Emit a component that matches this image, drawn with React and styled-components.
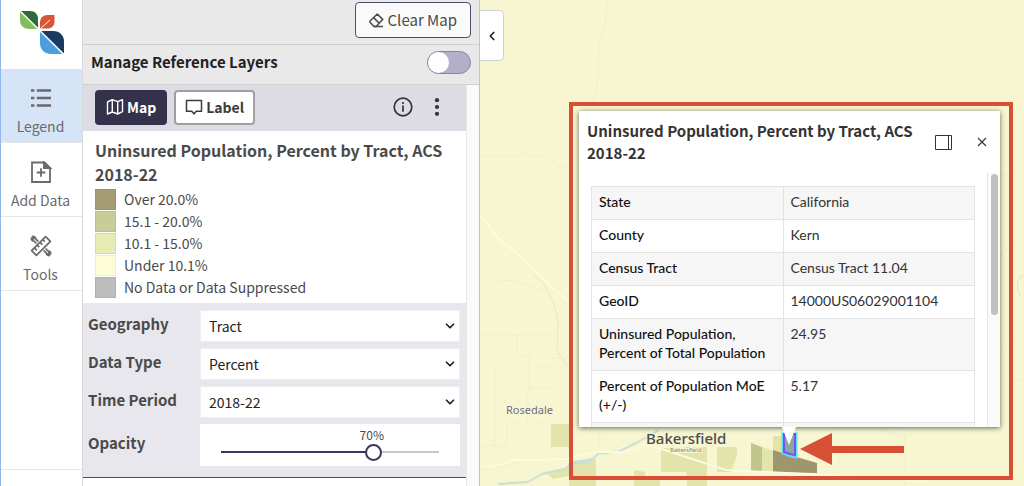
import React, { useState } from 'react';
import styled, { createGlobalStyle } from 'styled-components';
import { ChevronDown, ChevronLeft } from 'lucide-react';

const GlobalStyle = createGlobalStyle`
  *, *::before, *::after { box-sizing: border-box; }
  body {
    margin: 0;
    background: #fff;
    color: #4a4a4a;
    font-family: 'Noto Sans CJK SC', 'Noto Sans', sans-serif;
    font-size: 14px;
    line-height: 20px;
  }
  button, select, input { font: inherit; color: inherit; margin: 0; }
`;

const Screen = styled.div`
  display: grid;
  grid-template-columns: 82px 398px 1fr;
  height: 100vh;
  overflow: hidden;
`;

/* ---------- sidebar ---------- */

const Sidebar = styled.nav`
  display: flex;
  flex-direction: column;
  border-left: 1px solid #8fb8e8;
  background: #fff;
`;

const LogoLink = styled.a`
  display: flex;
  justify-content: center;
  height: 69px;
  padding-top: 11px;
`;

const NavItem = styled.button`
  display: flex;
  flex-direction: column;
  align-items: center;
  gap: 7px;
  height: 74px;
  padding: 18px 4px 0 2px;
  border: 0;
  border-bottom: 1px solid #e6e6ea;
  background: ${props => (props.$active ? '#d5e4f7' : '#fff')};
  color: #6a6a6a;
  cursor: pointer;
`;

const NavFoot = styled.div`
  height: 17px;
  margin-top: auto;
  border-top: 1px solid #e6e6ea;
`;

/* ---------- panel ---------- */

const Panel = styled.section`
  display: flex;
  flex-direction: column;
  min-height: 0;
  border-left: 1px solid #d9d9dc;
  border-right: 1px solid #c4c4c4;
  background: #fff;
`;

const TopBar = styled.div`
  display: flex;
  justify-content: flex-end;
  padding: 2px 8px 6px;
  background: #e9e9e9;
  border-bottom: 1px solid #cfcfcf;
`;

const ClearButton = styled.button`
  display: flex;
  align-items: center;
  gap: 4px;
  height: 36px;
  padding: 0 13px;
  border: 1px solid #4f4d70;
  border-radius: 4px;
  background: #fafafa;
  font-size: 15px;
  cursor: pointer;
`;

const ReferenceRow = styled.label`
  display: flex;
  align-items: flex-start;
  justify-content: space-between;
  height: 40px;
  padding: 6px 8px 0;
  background: #e9e9e9;
  border-bottom: 1px solid #cfcfcf;
  color: #222;
  font-size: 15px;
  line-height: 22px;
  font-weight: 700;
`;

const Toggle = styled.input`
  appearance: none;
  display: flex;
  align-items: center;
  width: 44px;
  height: 23px;
  border: 1px solid #8583a8;
  border-radius: 12px;
  background: #b1b0c8;
  cursor: pointer;
  &::before {
    content: '';
    width: 21px;
    height: 21px;
    border-radius: 50%;
    background: #fff;
  }
  &:checked { justify-content: flex-end; }
`;

const PanelBody = styled.div`
  display: flex;
  flex: 1;
  min-height: 0;
`;

const Layer = styled.div`
  flex: 1;
  overflow: hidden;
`;

const Gutter = styled.div`
  width: 13px;
  border-left: 1px solid #e8e8e8;
  background: #fafafa;
`;

const LayerBar = styled.div`
  display: flex;
  align-items: center;
  gap: 7px;
  height: 46px;
  padding: 0 19px 2px 12px;
  background: #dddce5;
`;

const LayerButton = styled.button`
  display: flex;
  align-items: center;
  gap: 3px;
  height: 35px;
  padding: 0 9px;
  border: 2px solid ${props => (props.$primary ? '#33324a' : '#a0a0a0')};
  border-radius: 4px;
  background: ${props => (props.$primary ? '#33324a' : '#fff')};
  color: ${props => (props.$primary ? '#fff' : '#3c3c3c')};
  font-weight: 700;
  cursor: pointer;
`;

const LayerActions = styled.div`
  display: flex;
  gap: 14px;
  margin-left: auto;
`;

const IconButton = styled.button`
  display: flex;
  padding: 0;
  border: 0;
  background: none;
  color: #333;
  cursor: pointer;
`;

const LegendCard = styled.div`
  padding: 7px 12px 5px;
  border-bottom: 1px solid #e8e7ed;
`;

const LegendTitle = styled.h2`
  margin: 0 0 3px;
  font-size: 16px;
  line-height: 24px;
  font-weight: 700;
`;

const LegendList = styled.ul`
  display: flex;
  flex-direction: column;
  gap: 1px;
  margin: 0;
  padding: 0;
  list-style: none;
`;

const LegendEntry = styled.li`
  display: flex;
  align-items: center;
  gap: 8px;
  line-height: 21px;
`;

const Swatch = styled.span`
  width: 21px;
  height: 21px;
  border: 1px solid rgba(0, 0, 0, 0.06);
  background: ${props => props.$color};
`;

const Settings = styled.div`
  display: grid;
  grid-template-columns: 112px 1fr;
  gap: 6px 0;
  padding: 6px 6px 11px 5px;
  background: #e8e7ed;
  border-bottom: 1px solid #4f4d70;
`;

const FieldLabel = styled.label`
  align-self: center;
  padding-bottom: 5px;
  font-size: 15px;
  font-weight: 700;
`;

const SelectBox = styled.div`
  display: grid;
  align-items: center;
  height: 32px;
  background: #fff;
  color: #222;
  > * { grid-area: 1 / 1; }
  > svg { justify-self: end; margin-right: 3px; pointer-events: none; }
`;

const Select = styled.select`
  appearance: none;
  width: 100%;
  height: 32px;
  padding: 0 24px 0 8px;
  border: 1px solid #eeeef2;
  border-radius: 0;
  background: #fff;
`;

const SliderBox = styled.div`
  display: flex;
  flex-direction: column;
  height: 42px;
  padding: 3px 13px 0;
  background: #fff;
`;

const SliderValue = styled.output`
  padding: 0 8px;
  font-size: 12px;
  line-height: 16px;
`;

const Slider = styled.input`
  appearance: none;
  width: 100%;
  height: 18px;
  background:
    linear-gradient(to right, #3a3858 ${props => props.$value}%, #c8c8c8 ${props => props.$value}%)
    8px 50% / calc(100% - 16px) 2px no-repeat;
  &::-webkit-slider-thumb {
    appearance: none;
    width: 17px;
    height: 17px;
    border: 2px solid #3a3858;
    border-radius: 50%;
    background: #fff;
  }
`;

/* ---------- map ---------- */

const MapArea = styled.main`
  position: relative;
  overflow: hidden;
  background: #f7f6d1;
`;

const MapCanvas = styled.svg`
  display: block;
`;

const CollapseButton = styled.button`
  position: absolute;
  left: 0;
  top: 10px;
  display: flex;
  align-items: center;
  justify-content: center;
  width: 24px;
  height: 51px;
  padding: 0;
  border: 1px solid #cfcfcf;
  border-left: 0;
  border-radius: 0 5px 5px 0;
  background: #fff;
  color: #222;
`;

const PlaceLabel = styled.text`
  font-family: 'Noto Sans', sans-serif;
  font-size: ${props => props.$size}px;
  font-weight: ${props => props.$weight || 400};
  fill: ${props => props.$color};
  stroke: #f7f6d1;
  stroke-width: 2px;
  paint-order: stroke;
`;

const Highlight = styled.div`
  position: absolute;
  left: 89px;
  top: 102px;
  width: 444px;
  height: 378px;
  border: 4px solid #d75036;
  pointer-events: none;
`;

const Popup = styled.article`
  position: absolute;
  left: 99px;
  top: 111px;
  display: flex;
  flex-direction: column;
  width: 421px;
  height: 316px;
  background: #fff;
  box-shadow: 0 1px 5px rgba(0, 0, 0, 0.6);
  &::after {
    content: '';
    position: absolute;
    top: 100%;
    left: 203px;
    width: 14px;
    height: 18px;
    background: #fff;
    clip-path: polygon(0 0, 100% 0, 50% 100%);
  }
`;

const PopupHeader = styled.header`
  display: flex;
  align-items: center;
  height: 62px;
  padding: 0 12px 0 8px;
`;

const PopupTitle = styled.h3`
  flex: 1;
  margin: 0;
  color: #333;
  font-size: 15px;
  line-height: 22px;
  font-weight: 700;
`;

const PopupActions = styled.div`
  display: flex;
  align-items: center;
  gap: 24px;
`;

const PopupBody = styled.div`
  display: flex;
  flex: 1;
  min-height: 0;
`;

const TableWrap = styled.div`
  flex: 1;
  overflow: hidden;
  padding: 13px 12px 0;
`;

const ScrollTrack = styled.div`
  width: 13px;
  padding: 1px 2px;
  border-left: 1px solid #e8e8e8;
  background: #fafafa;
`;

const ScrollThumb = styled.div`
  width: 7px;
  height: 141px;
  margin: 0 auto;
  border-radius: 4px;
  background: #c1c1c1;
`;

const Table = styled.table`
  width: 100%;
  border-collapse: collapse;
  table-layout: fixed;
  font-family: Lato, sans-serif;
  font-size: 14px;
  line-height: 19px;
  color: #333;
  th, td {
    padding: 5px 7px 8px;
    border: 1px solid #e3e3e3;
    text-align: left;
    vertical-align: top;
  }
  th { color: #111; font-weight: 500; }
  tr:nth-child(odd) { background: #f6f6f6; }
`;

const NAV = [
  { id: 'legend', label: 'Legend', icon: LegendIcon },
  { id: 'add', label: 'Add Data', icon: AddDataIcon },
  { id: 'tools', label: 'Tools', icon: ToolsIcon },
];

const CLASSES = [
  { label: 'Over 20.0%', color: '#a59c73' },
  { label: '15.1 - 20.0%', color: '#c8cc96' },
  { label: '10.1 - 15.0%', color: '#e7eab3' },
  { label: 'Under 10.1%', color: '#fdfdd8' },
  { label: 'No Data or Data Suppressed', color: '#bdbdbd' },
];

const FIELDS = [
  { id: 'geography', label: 'Geography', options: ['Tract', 'County', 'State'] },
  { id: 'dataType', label: 'Data Type', options: ['Percent', 'Number'] },
  { id: 'period', label: 'Time Period', options: ['2018-22', '2017-21'] },
];

const ROWS = [
  ['State', 'California'],
  ['County', 'Kern'],
  ['Census Tract', 'Census Tract 11.04'],
  ['GeoID', '14000US06029001104'],
  ['Uninsured Population, Percent of Total Population', '24.95'],
  ['Percent of Population MoE (+/-)', '5.17'],
  ['', ''],
];

function Logo() {
  return (
    <svg width="44" height="44" viewBox="0 0 44 44">
      <path d="M0 0v9c0 5.500 3.500 9 9 9h9z" fill="#7fbf5a" />
      <path d="M0 0h10c5 0 8 3.500 8 8v10z" fill="#2f6b3a" />
      <path d="M20 17.500v-6C20 7 23 4 27.500 4h7v6.500c0 4.500-3 7-7 7z" fill="#d65638" />
      <path d="M20.500 17.500L30 9" stroke="#fff" strokeWidth="1" />
      <path d="M20 20v12c0 7 5 11 11 11h13z" fill="#4a9fdb" />
      <path d="M20 20h13c7 0 11 5 11 10v13z" fill="#1b3a60" />
      <path d="M0 0l44 43.500" stroke="#fff" strokeWidth="1.600" />
    </svg>
  );
}

function LegendIcon() {
  return (
    <svg width="22" height="22" viewBox="0 0 22 22" fill="none" stroke="currentColor" strokeWidth="2.4">
      <path d="M1 3.5h3.4M6.8 3.5H21M1 11h3.4M6.8 11H21M1 18.5h3.4M6.8 18.5H21" />
    </svg>
  );
}

function AddDataIcon() {
  return (
    <svg width="22" height="22" viewBox="0 0 22 22" fill="none" stroke="currentColor" strokeWidth="1.8">
      <path d="M2 1.5h12.5L20 7v14H2z" />
      <path d="M14 1.5V7h6z" fill="currentColor" />
      <path d="M11 7.2v8.6M6.7 11.5h8.6" />
    </svg>
  );
}

function ToolsIcon() {
  return (
    <svg width="22" height="22" viewBox="0 0 22 22" fill="none" stroke="currentColor" strokeWidth="1.7" strokeLinejoin="round">
      <path d="M15.6 1.6l4.8 4.8L6.4 20.4 1.6 15.6z" />
      <path d="M12.8 4.6l2 2M10 7.3l2.4 2.4M7.2 10.1l2 2M4.4 12.9l2.4 2.4" />
      <path d="M8.4 6.6L5.7 3.9C5.6 2.3 4 1.2 2.4 1.5L4 3.3 3.2 4.3 1.3 3.2C1.2 5 2.6 6.2 4.2 6.2L6.4 8.5" />
      <path d="M13.6 15.4l2.7 2.7c.1 1.6 1.7 2.7 3.3 2.4L18 18.700l.8-1 1.9 1.1c.1-1.800-1.300-3-2.900-3L15.600 13.500" />
    </svg>
  );
}

function EraserIcon() {
  return (
    <svg width="15" height="15" viewBox="0 0 15 15" fill="none" stroke="currentColor" strokeWidth="1.5" strokeLinejoin="round">
      <path d="M8.3 1l5.4 5.4-6.600 7H5L1 9.200V8z" />
      <path d="M4.600 4.600l5.700 5.600M5 13.400h9" />
    </svg>
  );
}

function MapIcon() {
  return (
    <svg width="18" height="18" viewBox="0 0 18 18" fill="none" stroke="currentColor" strokeWidth="1.4" strokeLinejoin="round">
      <path d="M1.5 4L6.3 1.7l5.4 2 4.8-2v12L11.7 16l-5.4-2-4.8 2z" />
      <path d="M6.3 1.7V14M11.7 3.7V16" />
    </svg>
  );
}

function CommentIcon() {
  return (
    <svg width="18" height="18" viewBox="0 0 18 18" fill="none" stroke="currentColor" strokeWidth="1.5">
      <path d="M1.5 2.5h15v10.800h-5.200L9 15.800l-2.300-2.500H1.500z" />
    </svg>
  );
}

function InfoIcon() {
  return (
    <svg width="20" height="20" viewBox="0 0 20 20" fill="none" stroke="currentColor" strokeWidth="1.7">
      <circle cx="10" cy="10" r="8.8" />
      <path d="M10 8.5v6.2" />
      <path d="M10 5v2" />
    </svg>
  );
}

function DotsIcon() {
  return (
    <svg width="20" height="20" viewBox="0 0 20 20" fill="currentColor">
      <circle cx="10" cy="3.2" r="2.1" />
      <circle cx="10" cy="10" r="2.1" />
      <circle cx="10" cy="16.8" r="2.1" />
    </svg>
  );
}

function DockIcon() {
  return (
    <svg width="17" height="15" viewBox="0 0 17 15" fill="none" stroke="currentColor">
      <path d="M.5.5h16v14H.5zM13.5.5v14" />
    </svg>
  );
}

function CloseIcon() {
  return (
    <svg width="12" height="12" viewBox="0 0 12 12" stroke="currentColor" strokeWidth="1.1">
      <path d="M2 2l8 8M10 2l-8 8" />
    </svg>
  );
}

function BaseMap() {
  return (
    <MapCanvas width="544" height="486" viewBox="0 0 544 486">
      <g fill="#e2e4ac">
        <path d="M71 424h18v23H71z" />
        <path d="M65 472l24-5v9l-16 3z" />
        <path d="M89 463l27-4v27H89z" />
        <path d="M154 470l11 2v4h15v10h-26z" />
        <path d="M181 448h26v24h-26zM205 447h22v39h-20zM237 447h20v8l-6 17h-14z" />
        <path d="M282 447l11 4v22h-11zM293 436h10v16l-10-2z" />
      </g>
      <path d="M271 443l11 4v25l-11-1z" fill="#c1c68f" />
      <path d="M293 450l44 13v10l-44-1z" fill="#9f966d" />
      <path d="M18 484l30-2 14-8 23-5 8-7 17-1 8-7 22-3 18-9 21-12" fill="none" stroke="#c9dfd9" strokeWidth="2" strokeLinejoin="round" />
      <path d="M88 464l6-3 8-1 9-2-3 5-10 1-6 3z" fill="#c9dfd9" />
      <g fill="none" stroke="#f0efca" strokeWidth="1">
        <path d="M128 0l-3 25-6 15-1 40-5 25" />
        <path d="M0 156h41l1-5 10 5h16l8 9 13 4" />
        <path d="M0 270l17 10 18 1 32 11M0 335h76M37 335v20l12 1v12h27M49 368v20h22M71 358h18M0 357l15 12v77H0M27 424v22H15M27 424h43M48 388v36M0 470l24-3 24-8 40-1" />
        <path d="M54 275l10 9 10 20 4 18-1 28 10 16" stroke="#e8e7c2" />
        <path d="M120 430v26M145 440l-24 20M350 427h70M360 440v30M425 427v60M395 427l30 11 14-11M520 175c8 0 12-6 24-8M520 255l20-16M544 330l-24 20M524 387l20-8" />
      </g>
      <g fill="none" stroke="#fbfbde" strokeWidth="2">
        <path d="M0 215l20 25 25 20 30 30 14 12M10 468l24-8 52-1 30-7h28l22-8 80 26 60 3 140 8" />
      </g>
      <path d="M544 276c-8 0-8 12-4 20" stroke="#dfe2c2" fill="none" />
      <path d="M303 434h13v23l-5-1-8-3z" fill="#8fa5a4" stroke="#5fdcf2" strokeWidth="3" />
      <path d="M304 434h11v21l-5-1-6-2z" fill="#8fa5a4" stroke="#7355f0" strokeWidth="2" />
      <PlaceLabel x="26" y="414" $size={11} $color="#6e6f86">Rosedale</PlaceLabel>
      <PlaceLabel x="166" y="444" $size={15} $weight={500} $color="#4c4c4c">Bakersfield</PlaceLabel>
      <PlaceLabel x="190" y="452" $size={6} $color="#86866f">Bakersfield</PlaceLabel>
      <path d="M320 449l32-16v13h72v7h-72v12z" fill="#d75036" />
    </MapCanvas>
  );
}

function App() {
  const [active, setActive] = useState('legend');
  const [reference, setReference] = useState(false);
  const [opacity, setOpacity] = useState(70);

  return (
    <Screen>
      <GlobalStyle />
      <Sidebar>
        <LogoLink href="#" aria-label="Home"><Logo /></LogoLink>
        {NAV.map(({ id, label, icon: Icon }) => (
          <NavItem key={id} $active={id === active} onClick={() => setActive(id)}>
            <Icon />
            {label}
          </NavItem>
        ))}
        <NavFoot />
      </Sidebar>

      <Panel>
        <TopBar>
          <ClearButton><EraserIcon /> Clear Map</ClearButton>
        </TopBar>
        <ReferenceRow>
          Manage Reference Layers
          <Toggle type="checkbox" checked={reference} onChange={(e) => setReference(e.target.checked)} />
        </ReferenceRow>
        <PanelBody>
          <Layer>
            <LayerBar>
              <LayerButton $primary><MapIcon /> Map</LayerButton>
              <LayerButton><CommentIcon /> Label</LayerButton>
              <LayerActions>
                <IconButton aria-label="Layer information"><InfoIcon /></IconButton>
                <IconButton aria-label="More options"><DotsIcon /></IconButton>
              </LayerActions>
            </LayerBar>
            <LegendCard>
              <LegendTitle>Uninsured Population, Percent by Tract, ACS 2018-22</LegendTitle>
              <LegendList>
                {CLASSES.map(c => (
                  <LegendEntry key={c.label}><Swatch $color={c.color} />{c.label}</LegendEntry>
                ))}
              </LegendList>
            </LegendCard>
            <Settings>
              {FIELDS.map(field => (
                <React.Fragment key={field.id}>
                  <FieldLabel htmlFor={field.id}>{field.label}</FieldLabel>
                  <SelectBox>
                    <Select id={field.id}>
                      {field.options.map(o => <option key={o}>{o}</option>)}
                    </Select>
                    <ChevronDown size={14} strokeWidth={3} />
                  </SelectBox>
                </React.Fragment>
              ))}
              <FieldLabel htmlFor="opacity">Opacity</FieldLabel>
              <SliderBox>
                <SliderValue htmlFor="opacity">
                  <span style={{ marginLeft: `calc(${opacity}% - 14px)` }}>{opacity}%</span>
                </SliderValue>
                <Slider
                  id="opacity"
                  type="range"
                  value={opacity}
                  $value={opacity}
                  onChange={(e) => setOpacity(Number(e.target.value))}
                />
              </SliderBox>
            </Settings>
          </Layer>
          <Gutter />
        </PanelBody>
      </Panel>

      <MapArea>
        <BaseMap />
        <Popup>
          <PopupHeader>
            <PopupTitle>Uninsured Population, Percent by Tract, ACS 2018-22</PopupTitle>
            <PopupActions>
              <IconButton aria-label="Dock"><DockIcon /></IconButton>
              <IconButton aria-label="Close"><CloseIcon /></IconButton>
            </PopupActions>
          </PopupHeader>
          <PopupBody>
            <TableWrap>
              <Table>
                <tbody>
                  {ROWS.map(([name, value]) => (
                    <tr key={name}><th scope="row">{name}</th><td>{value}</td></tr>
                  ))}
                </tbody>
              </Table>
            </TableWrap>
            <ScrollTrack><ScrollThumb /></ScrollTrack>
          </PopupBody>
        </Popup>
        <Highlight />
        <CollapseButton aria-label="Collapse panel"><ChevronLeft size={14} strokeWidth={3} /></CollapseButton>
      </MapArea>
    </Screen>
  );
}

export default App;
